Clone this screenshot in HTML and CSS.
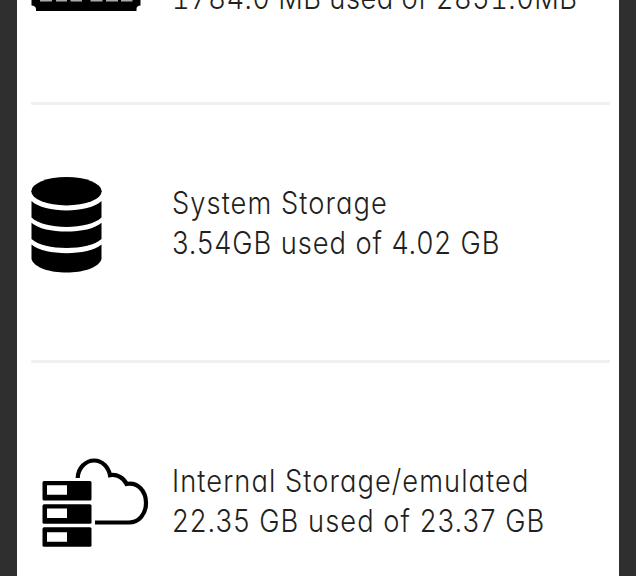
FILE: index.html
```
<!DOCTYPE html>
<html>
<head>
    <meta charset="UTF-8">
    <title>Storage</title>
    <link rel="stylesheet" href="styles.css">
</head>
<body>
    <div class="container">
        <div class="item memory">
            <div class="icon">
                <svg width="110" height="50" viewBox="0 0 110 50">
                    <path d="M0.500 0H109.500V44.500C107 44.500 105.500 46 105.500 48V50H5V48C5 46 3 44.500 0.500 44.500Z"/>
                    <path d="M9 39.500h12M25 39.500h11M39.500 39.500h11.500M59.500 39.500h12M75 39.500h12M90 39.500h11.500" stroke="#aaa" stroke-width="2"/>
                </svg>
            </div>
            <div class="text">
                <p class="ram-used">1784.0 MB used of 2851.0MB</p>
            </div>
        </div>
        <div class="item system">
            <div class="icon">
                <svg width="71" height="96" viewBox="0 0 71 96">
                    <ellipse cx="35.500" cy="14.200" rx="35.200" ry="14.200"/>
                    <path d="M0.500 24C13 36.500 58 36.500 70.500 24V40.500C58 53 13 53 0.500 40.500Z"/>
                    <path d="M0.500 45.700C13 57.500 58 57.500 70.500 45.700V62C58 74 13 74 0.500 62Z"/>
                    <path d="M0.500 67.500C13 79 58 79 70.500 67.500V82C65 100 6 100 0.500 82Z"/>
                </svg>
            </div>
            <div class="text">
                <p class="system-name">System Storage</p>
                <p class="system-used">3.54GB used of 4.02 GB</p>
            </div>
        </div>
        <div class="item internal">
            <div class="icon">
                <svg width="107" height="90" viewBox="0 0 107 90">
                    <rect x="0.500" y="23" width="49" height="19.500" rx="1.500"/>
                    <rect x="0.500" y="46.200" width="49" height="19.500" rx="1.500"/>
                    <rect x="0.500" y="69.300" width="49" height="19.500" rx="1.500"/>
                    <path fill="#fff" d="M5 27.200h20v9.500H5zM5 50.500h20v9.500H5zM5 74.200h20v9.500H5z"/>
                    <path fill="none" stroke="#000" stroke-width="4.200" d="M35.700 20C36 10 43.500 2.500 52.300 2.500C60 2.500 66.500 9 68 17.200C75 15.800 82 20 84.500 26C96 24 104 33 104 45C104 56 97 64.500 87 64.500H53"/>
                </svg>
            </div>
            <div class="text">
                <p class="internal-name">Internal Storage/emulated</p>
                <p class="internal-used">22.35 GB used of 23.37 GB</p>
            </div>
        </div>
    </div>
</body>
</html>
```
FILE: styles.css
```
body {
    margin: 0;
    height: 576px;
    overflow: hidden;
    background-color: #2f2f2f;
    font-family: Inter, sans-serif;
}

.container {
    box-sizing: border-box;
    width: 602px;
    height: 576px;
    margin-left: 17px;
    padding: 0 9px 0 14px;
    background-color: #fff;
    overflow: hidden;
}

.item {
    box-sizing: border-box;
    display: flex;
    align-items: flex-start;
    height: 258px;
    border-bottom: 3px solid #f0f0f0;
}

.icon {
    width: 141px;
    flex-shrink: 0;
}

.icon svg {
    display: block;
}

.text {
    flex: 1;
}

p {
    margin: 0;
    width: max-content;
    font-size: 31px;
    font-weight: 350;
    line-height: 39.500px;
    letter-spacing: 1.200px;
    white-space: nowrap;
    color: #231f20;
    font-feature-settings: "cv11";
    transform: scaleX(0.88);
    transform-origin: left;
}

/* the list is scrolled, only the end of this row shows */
.memory {
    height: 144px;
    margin-top: -39px;
}

.memory .text {
    padding-top: 17px;
}

.ram-used {
    letter-spacing: 0.550px;
    font-feature-settings: "cv11", "tnum";
}

.system .icon {
    padding-top: 72px;
}

.system .text {
    padding-top: 78px;
}

.system-used {
    letter-spacing: 1.050px;
}

.internal {
    border-bottom: none;
}

.internal .icon {
    width: 130px;
    padding: 95px 0 0 11px;
}

.internal .text {
    padding-top: 98px;
}
```
